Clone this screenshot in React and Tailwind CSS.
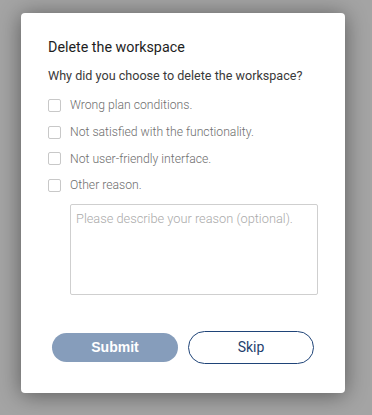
import React, { useState } from 'react';

const reasons = [
  'Wrong plan conditions.',
  'Not satisfied with the functionality.',
  'Not user-friendly interface.',
  'Other reason.',
];

const App = () => {
  const [checked, setChecked] = useState([]);
  const [note, setNote] = useState('');

  const toggle = (i) => {
    setChecked(checked.includes(i) ? checked.filter(c => c !== i) : [...checked, i]);
  };

  return (
    <div className="w-[372px] h-[415px] bg-[#a4a4a4] pt-[13px] pl-[21px] overflow-hidden" style={{ fontFamily: 'Roboto, "Liberation Sans", sans-serif' }}>
      <div className="w-[324px] h-[380px] bg-white rounded-[4px] shadow-[0_2px_22px_rgba(0,0,0,0.45)] pl-[27px] pr-[27px] pt-[25px]">
        <h1 className="text-[14.3px] leading-[18px] font-normal text-[#1e1e1e]">Delete the workspace</h1>
        <p className="mt-[12px] text-[12.6px] leading-[16px] text-[#3a3a3a]">Why did you choose to delete the workspace?</p>

        <div className="mt-[8px] flex flex-col">
          {reasons.map((r, i) => (
            <label key={r} className="flex items-center h-[26.7px] cursor-pointer" onClick={() => toggle(i)}>
              <span className="w-[13px] h-[13px] border border-[#c8c8c8] rounded-[2px] bg-white flex items-center justify-center">
                {checked.includes(i) && <span className="w-[7px] h-[7px] bg-[#1e4278]" />}
              </span>
              <span className="ml-[9px] text-[12.2px] font-light text-[#6e6e6e]">{r}</span>
            </label>
          ))}
        </div>

        <textarea
          value={note}
          onChange={(e) => setNote(e.target.value)}
          placeholder="Please describe your reason (optional)."
          className="mt-[5px] ml-[22px] block w-[248px] h-[91px] border border-[#cfcfcf] rounded-[2px] px-[5px] py-[4px] text-[12.8px] font-light text-[#444] placeholder:text-[#aaaaaa] resize-none focus:outline-none"
        />

        <div className="mt-[36px] flex items-center">
          <button
            type="button"
            disabled
            className="ml-[4px] w-[126px] h-[29px] rounded-full bg-[#869dbb] text-white text-[14px] font-bold"
            style={{ fontFamily: '"Liberation Sans", Arial, sans-serif' }}
          >
            Submit
          </button>
          <button
            type="button"
            className="ml-[10px] w-[126px] h-[33px] rounded-full border border-[#1f4478] text-[#1f3f6e] text-[14px]"
          >
            Skip
          </button>
        </div>
      </div>
    </div>
  );
};

export default App;
